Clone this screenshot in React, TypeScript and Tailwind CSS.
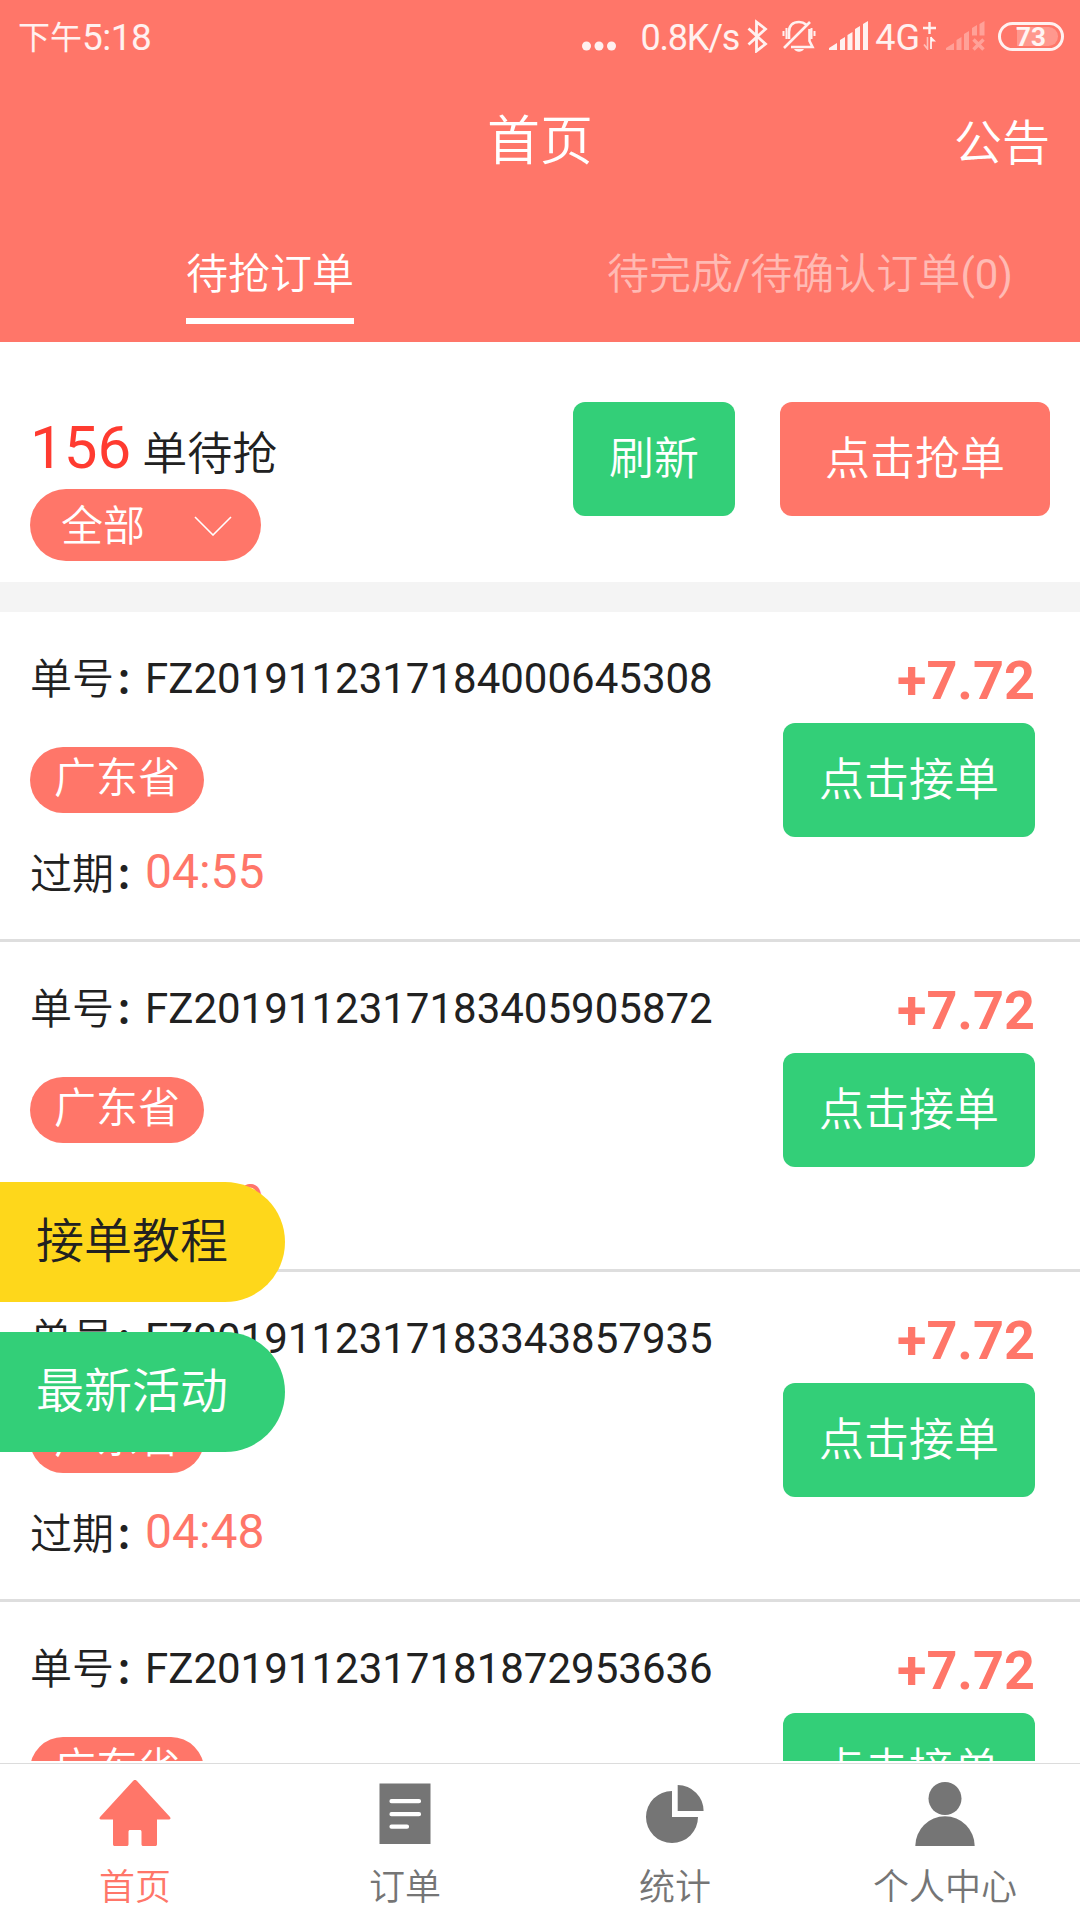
import type { ReactNode } from 'react';

interface Order {
  no: string;
  province: string;
  expires: string;
  price: string;
}

const orders: Order[] = [
  { no: 'FZ2019112317184000645308', province: '广东省', expires: '04:55', price: '+7.72' },
  { no: 'FZ2019112317183405905872', province: '广东省', expires: '04:49', price: '+7.72' },
  { no: 'FZ2019112317183343857935', province: '广东省', expires: '04:48', price: '+7.72' },
  { no: 'FZ2019112317181872953636', province: '广东省', expires: '04:32', price: '+7.72' },
];

export default function App() {
  return (
    <div className="relative flex h-[1920px] w-[1080px] flex-col overflow-hidden bg-white font-['Roboto','Noto_Sans_CJK_SC',sans-serif] text-[#212121]">
      <header className="h-[342px] shrink-0 bg-[#ff7669] text-white">
        <StatusBar />
        <div className="grid h-[132px] grid-cols-3 items-center px-[30px]">
          <span />
          <h1 className="pt-[9px] text-center text-[53px] leading-none"><Cn>首页</Cn></h1>
          <span className="pt-[11px] text-right text-[48px] leading-none"><Cn>公告</Cn></span>
        </div>
        <nav className="grid h-[138px] grid-cols-2 text-[42px] leading-[60px]">
          <div className="flex justify-center pt-[41px]">
            <span className="h-[79px] border-b-[6px] border-white"><Cn>待抢订单</Cn></span>
          </div>
          <div className="pt-[41px] text-center text-white/50">
            <Cn>待完成</Cn>/<Cn>待确认订单</Cn>(0)
          </div>
        </nav>
      </header>

      <section className="flex h-[240px] shrink-0 justify-between px-[30px] pt-[60px]">
        <div className="pt-[11px]">
          <div className="h-[76px] text-[45px] leading-[70px]">
            <span className="text-[60px] text-[#ff3b30]">156</span> <Cn className="relative top-[2px]">单待抢</Cn>
          </div>
          <button className="flex h-[72px] w-[231px] items-center justify-between rounded-full bg-[#ff7669] pr-[29px] pl-[31px] text-[42px] leading-none text-white">
            <Cn className="pt-[3px]">全部</Cn>
            <svg className="mt-[2px]" width="38" height="20" viewBox="0 0 38 20" fill="none" stroke="currentColor" strokeWidth="1.6">
              <path d="M1 1l18 18L37 1" />
            </svg>
          </button>
        </div>
        <div className="flex gap-[45px]">
          <Button className="bg-[#33cf78] px-[36px]">刷新</Button>
          <Button className="bg-[#ff7669] px-[45px]">点击抢单</Button>
        </div>
      </section>

      <div className="h-[30px] shrink-0 bg-[#f4f4f4]" />

      <main className="h-[1149px] shrink-0 overflow-hidden">
        {orders.map((o) => (
          <OrderCard key={o.no} order={o} />
        ))}
      </main>

      <TabBar />

      <div className="absolute top-[1182px] left-0 flex h-[120px] w-[285px] items-center rounded-r-full bg-[#fed71b] pl-[36px] text-[48px] leading-none">
        <Cn>接单教程</Cn>
      </div>
      <div className="absolute top-[1332px] left-0 flex h-[120px] w-[285px] items-center rounded-r-full bg-[#33cf78] pl-[36px] text-[48px] leading-none text-white">
        <Cn>最新活动</Cn>
      </div>
    </div>
  );
}

// Chinese labels use the demi-light cut, digits stay regular
function Cn({ className = '', children }: { className?: string; children: ReactNode }) {
  return <span className={`font-[350] ${className}`}>{children}</span>;
}

function Button({ className, children }: { className: string; children: ReactNode }) {
  return (
    <button className={`flex h-[114px] items-center rounded-xl pt-px text-[45px] leading-none text-white ${className}`}>
      <Cn>{children}</Cn>
    </button>
  );
}

function OrderCard({ order }: { order: Order }) {
  return (
    <article className="flex h-[330px] justify-between border-b-[3px] border-[#dedede] pr-[45px] pl-[30px]">
      <div className="text-[42px] leading-[60px]">
        <div className="mt-[37px] h-[60px]">
          <Label>单号</Label>
          {order.no}
        </div>
        <div className="mt-[38px] flex h-[66px] w-[174px] items-center justify-center rounded-full bg-[#ff7669] pb-[3px] text-white">
          <Cn>{order.province}</Cn>
        </div>
        <div className="mt-[29px] h-[60px]">
          <Label>过期</Label>
          <span className="text-[48px] text-[#ff7669]">{order.expires}</span>
        </div>
      </div>
      <div className="flex flex-col items-end">
        <div className="mt-[39px] mb-[12px] text-[54px] leading-[60px] font-bold text-[#ff7669]">{order.price}</div>
        <Button className="bg-[#33cf78] px-[36px]">点击接单</Button>
      </div>
    </article>
  );
}

function Label({ children }: { children: ReactNode }) {
  return (
    <>
      <Cn className="relative top-px">{children}</Cn>
      <span className="relative top-px -mr-[6px] ml-px text-[36px] leading-none font-bold">：</span>
    </>
  );
}

function StatusBar() {
  return (
    <div className="flex h-[72px] items-center justify-between pr-[16px] pl-[18px] text-white/90">
      <div className="flex items-center pt-[3px] text-[37px] leading-none">
        <span className="text-[32px]">下午</span>
        <span className="tracking-[-0.5px]">5:18</span>
      </div>
      <div className="flex items-center">
        <svg className="mt-[19px] mr-[24px]" width="34" height="10" viewBox="0 0 34 10" fill="currentColor">
          <circle cx="4.5" cy="5" r="4.5" />
          <circle cx="17" cy="5" r="4.5" />
          <circle cx="29.5" cy="5" r="4.5" />
        </svg>
        <span className="mr-[8px] pt-[3px] text-[36px] leading-none tracking-[-1.2px]">0.8K/s</span>
        <svg className="mr-[14px]" width="21" height="34" viewBox="0 0 21 34" fill="none" stroke="currentColor" strokeWidth="2.8">
          <path d="M1.5 9.5L18.5 25l-9 7V3l9 7L1.5 25.5" />
        </svg>
        <svg className="mr-[13px]" width="34" height="34" viewBox="0 0 34 34" fill="none" stroke="currentColor" strokeWidth="2.6">
          <path d="M2 29L28 3M7 20v-7c0-7 4-10 10-10 3 0 5 .7 7 2.500M27.500 10v12l3 6H9" />
          <path d="M1.500 12v5M4.500 9v11M32.500 12v5M29.500 9v11" strokeWidth="2" />
          <path d="M12 30h10c-2 3.500-8 3.500-10 0z" fill="currentColor" stroke="none" />
        </svg>
        <svg className="mr-[7px]" width="39" height="30" viewBox="0 0 39 30" fill="currentColor">
          <path d="M0 29v-2l8-5v7zM11 19l5-3v13h-5zM18.500 14l5-3v18h-5zM26 8l5-3v24h-5zM34 3l5-3v29h-5z" />
        </svg>
        <span className="pt-[3px] text-[36px] leading-none">4G</span>
        <svg className="mr-[10px] ml-[3px]" width="13" height="28" viewBox="0 0 13 28" fill="none" stroke="currentColor" strokeWidth="2.4">
          <path d="M0 6h13M6.500 0v12" />
          <path d="M4.500 15v12L1 22.500" strokeWidth="1.600" opacity="0.6" />
          <path d="M8 27V15" strokeWidth="1.800" />
          <path d="M8 14.500l5 5H8z" fill="currentColor" stroke="none" />
        </svg>
        <svg className="mr-[13px] opacity-35" width="39" height="30" viewBox="0 0 39 30" fill="currentColor">
          <path d="M0 29v-2l8-5v7zM10.500 19l5-3v13h-5zM18 13l5-3v19h-5zM26 7l5-3v10.500h-5zM33.500 3l5-3v14.500h-5z" />
          <path d="M27.500 18.500l10 10M37.500 18.500l-10 10" stroke="currentColor" strokeWidth="3.500" />
        </svg>
        <div className="relative flex h-[29px] w-[66px] items-center justify-center rounded-full border-[3px] border-current pt-px text-[26px] leading-none font-bold">
          <span className="absolute inset-y-[2px] right-[3px] w-[41px] rounded-r-full bg-white/25" />
          <span className="relative">73</span>
        </div>
      </div>
    </div>
  );
}

function TabBar() {
  return (
    <footer className="mt-[2px] grid h-[157px] shrink-0 grid-cols-4 border-t border-[#dcdcdc] bg-white">
      <Tab label="首页" active>
        <path d="M36 4c1 0 1.500.5 2 1l33 36c1 1.500.5 2.500-1 2.500H58V68c0 1.500-.5 2-2 2H44.500c-1.500 0-2-.5-2-2V56c0-1.500-.5-2-2-2h-9c-1.500 0-2 .5-2 2v12c0 1.500-.5 2-2 2H16c-1.500 0-2-.5-2-2V43.500H2c-1.500 0-2-1-1-2.500L34 5c.5-.5 1-1 2-1z" />
      </Tab>
      <Tab label="订单">
        <path d="M10.500 7.500h51V68h-51z" />
        <path d="M22.500 25.200h27.500M22.500 38.200h27.500M22.500 50.700h15.500" stroke="white" strokeWidth="4.200" strokeLinecap="round" />
      </Tab>
      <Tab label="统计">
        <path d="M33 15v26h26A26 26 0 1 1 33 15z" />
        <path d="M38.700 9A26 26 0 0 1 64.600 35H38.700z" />
      </Tab>
      <Tab label="个人中心">
        <circle cx="36" cy="22.500" r="16.500" />
        <path d="M6.300 70a29.700 29.700 0 0 1 59.400 0z" />
      </Tab>
    </footer>
  );
}

function Tab({ label, active, children }: { label: string; active?: boolean; children: ReactNode }) {
  return (
    <div className={`flex flex-col items-center pt-[12px] ${active ? 'text-[#ff7669]' : 'text-[#757575]'}`}>
      <svg width="72" height="72" viewBox="0 0 72 72" fill="currentColor">
        {children}
      </svg>
      <span className="mt-[22px] text-[36px] leading-[36px]"><Cn>{label}</Cn></span>
    </div>
  );
}
